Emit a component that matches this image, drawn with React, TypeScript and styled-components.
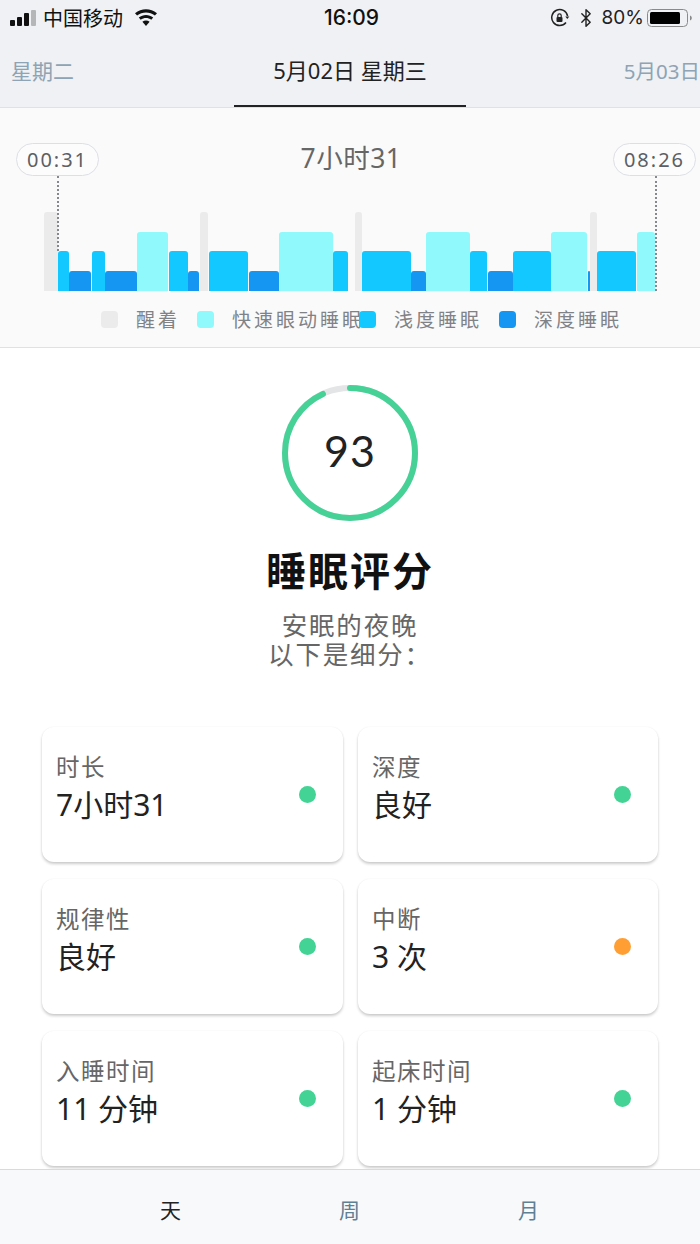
import React from 'react'
import styled, { createGlobalStyle } from 'styled-components'
import { Bluetooth } from 'lucide-react'

type Stage = 'awake' | 'rem' | 'light' | 'deep'

const stageColors: Record<Stage, string> = {
  awake: '#ebebec',
  rem: '#8ff9fb',
  light: '#12c8ff',
  deep: '#1496f2',
}

const stageHeights: Record<Stage, number> = {
  awake: 79,
  rem: 59,
  light: 40,
  deep: 20,
}

// start and end x of every block, in chart coordinates
const segments: [Stage, number, number][] = [
  ['awake', 0, 13.5],
  ['light', 13.5, 25],
  ['deep', 25, 47],
  ['light', 47.5, 61],
  ['deep', 61, 92.5],
  ['rem', 93, 124],
  ['light', 124.5, 144],
  ['deep', 144, 155],
  ['awake', 156, 164],
  ['light', 164.5, 204],
  ['deep', 204.5, 235],
  ['rem', 235, 289],
  ['light', 289, 304],
  ['awake', 310.5, 318],
  ['light', 318, 367],
  ['deep', 367, 382],
  ['rem', 382, 426],
  ['light', 426, 443],
  ['deep', 444, 469],
  ['light', 469, 507],
  ['rem', 507, 543],
  ['deep', 544, 545.5],
  ['awake', 546, 553],
  ['light', 553, 592],
  ['rem', 592.5, 611],
]

const legend: { stage: Stage; label: string; overlap?: boolean }[] = [
  { stage: 'awake', label: '醒着' },
  { stage: 'rem', label: '快速眼动睡眠' },
  { stage: 'light', label: '浅度睡眠', overlap: true },
  { stage: 'deep', label: '深度睡眠' },
]

const metrics = [
  { label: '时长', value: '7小时31', color: '#43d394' },
  { label: '深度', value: '良好', color: '#43d394' },
  { label: '规律性', value: '良好', color: '#43d394' },
  { label: '中断', value: '3 次', color: '#ff9f33' },
  { label: '入睡时间', value: '11 分钟', color: '#43d394' },
  { label: '起床时间', value: '1 分钟', color: '#43d394' },
]

const ringRadius = 65
const ringLength = 2 * Math.PI * ringRadius
const score = 93

const App = () => {
  let cursor = 0
  return (
    <>
      <GlobalStyle />
      <Page>
        <TopArea>
          <StatusBar>
            <StatusLeft>
              <SignalBars>
                <SignalBar $h={6} />
                <SignalBar $h={9} />
                <SignalBar $h={13} />
                <SignalBar $h={16} $off />
              </SignalBars>
              <Carrier>中国移动</Carrier>
              <svg width="24" height="18" viewBox="0 0 24 18">
                <path d="M12 17l-3.6-4.2c2.100-1.700 5.100-1.700 7.200 0L12 17z" fill="#111" />
                <path d="M6.700 10.800L4.800 8.600c4.200-3.500 10.200-3.500 14.400 0l-1.900 2.200c-3.100-2.500-7.500-2.500-10.600 0z" fill="#111" />
                <path d="M3.100 6.600L1 4.200c6.400-5.300 15.600-5.300 22 0l-2.100 2.400c-5.200-4.200-12.600-4.200-17.800 0z" fill="#111" />
              </svg>
            </StatusLeft>
            <StatusTime>16:09</StatusTime>
            <StatusRight>
              <svg width="20" height="20" viewBox="0 0 20 20" fill="none">
                <path d="M16 14.500A8 8 0 1 1 17.600 8" stroke="#222" strokeWidth="1.500" />
                <path d="M15.300 8.500h4l-2 2.500z" fill="#222" />
                <rect x="6.500" y="9" width="6" height="5" rx="1" fill="#222" />
                <path d="M7.800 9V7.500a1.700 1.700 0 0 1 3.400 0V9" stroke="#222" strokeWidth="1.200" />
              </svg>
              <Bluetooth size={20} color="#222" strokeWidth={1.700} />
              <BatteryText>80%</BatteryText>
              <svg width="46" height="20" viewBox="0 0 46 20" fill="none">
                <rect x="0.500" y="1.500" width="40" height="17" rx="4" stroke="#8a8a8c" />
                <rect x="3" y="4" width="30" height="12" rx="1.500" fill="#000" />
                <path d="M43 7.500c1.300.4 1.800 1.300 1.800 2.500s-.5 2.100-1.800 2.500z" fill="#8a8a8c" />
              </svg>
            </StatusRight>
          </StatusBar>
          <DayTabs>
            <SideDay>星期二</SideDay>
            <CurrentDay>5月02日 星期三</CurrentDay>
            <NextDay>5月03日</NextDay>
          </DayTabs>
        </TopArea>

        <ChartPanel>
          <ChartHeader>
            <TimePill>00:31</TimePill>
            <Duration>7小时31</Duration>
            <TimePill>08:26</TimePill>
          </ChartHeader>
          <Chart>
            <Marker $left={13} $height={75} />
            <Marker $left={611} $height={115} />
            {segments.map(([stage, from, to], i) => {
              const gap = from - cursor
              cursor = to
              return (
                <Block
                  key={i}
                  $stage={stage}
                  style={{ width: to - from, marginLeft: gap }}
                />
              )
            })}
          </Chart>
          <Legend>
            {legend.map((item) => (
              <LegendItem key={item.label} $overlap={item.overlap}>
                <Swatch $stage={item.stage} />
                <LegendLabel>{item.label}</LegendLabel>
              </LegendItem>
            ))}
          </Legend>
        </ChartPanel>

        <Content>
          <ScoreRing>
            <svg width="140" height="140" viewBox="0 0 140 140" fill="none">
              <circle cx="70" cy="70" r={ringRadius} stroke="#e4e5e6" strokeWidth="6" />
              <circle
                cx="70"
                cy="70"
                r={ringRadius}
                stroke="#46d196"
                strokeWidth="6"
                strokeLinecap="round"
                strokeDasharray={`${(ringLength * score) / 100} ${ringLength}`}
                transform="rotate(-90 70 70)"
              />
            </svg>
            <ScoreValue>{score}</ScoreValue>
          </ScoreRing>
          <ScoreTitle>睡眠评分</ScoreTitle>
          <ScoreNote>
            安眠的夜晚
            <br />
            以下是细分：
          </ScoreNote>
          <MetricGrid>
            {metrics.map((metric) => (
              <MetricCard key={metric.label}>
                <MetricText>
                  <MetricLabel>{metric.label}</MetricLabel>
                  <MetricValue>{metric.value}</MetricValue>
                </MetricText>
                <MetricDot $color={metric.color} />
              </MetricCard>
            ))}
          </MetricGrid>
        </Content>

        <BottomTabs>
          <BottomTab $active>天</BottomTab>
          <BottomTab>周</BottomTab>
          <BottomTab>月</BottomTab>
        </BottomTabs>
      </Page>
    </>
  )
}

const GlobalStyle = createGlobalStyle`
  html, body {
    margin: 0;
    padding: 0;
    background: #ffffff;
  }
  * {
    box-sizing: border-box;
  }
`

const Page = styled.div`
  width: 700px;
  height: 1244px;
  display: flex;
  flex-direction: column;
  overflow: hidden;
  background: #ffffff;
  font-family: "Noto Sans", "Noto Sans CJK SC", sans-serif;
`

const TopArea = styled.header`
  height: 108px;
  flex-shrink: 0;
  background: #eff1f4;
  border-bottom: 1px solid #dfe1e5;
`

const StatusBar = styled.div`
  height: 35px;
  display: grid;
  grid-template-columns: 1fr auto 1fr;
  align-items: center;
  padding: 0 7px 0 10px;
  color: #111111;
`

const StatusLeft = styled.div`
  display: flex;
  align-items: center;
  gap: 10px;
`

const SignalBars = styled.div`
  display: flex;
  align-items: flex-end;
  gap: 2px;
  height: 16px;
  margin-right: -5px;
`

const SignalBar = styled.div<{ $h: number; $off?: boolean }>`
  width: 5px;
  height: ${(p) => p.$h}px;
  border-radius: 1px;
  background: ${(p) => (p.$off ? '#b5b6b8' : '#111111')};
`

const Carrier = styled.span`
  font-size: 20px;
  margin-left: 2px;
  margin-right: 1px;
`

const StatusTime = styled.span`
  font-family: Inter, "Liberation Sans", sans-serif;
  font-size: 21px;
  font-weight: 500;
`

const StatusRight = styled.div`
  display: flex;
  align-items: center;
  justify-content: flex-end;
  gap: 6px;
`

const BatteryText = styled.span`
  font-family: Inter, "Liberation Sans", sans-serif;
  font-size: 19px;
  margin-right: -3px;
  color: #222222;
`

const DayTabs = styled.nav`
  height: 72px;
  display: grid;
  grid-template-columns: 234px 232px 234px;
`

const SideDay = styled.div`
  display: flex;
  align-items: center;
  padding: 0 0 2px 11px;
  font-size: 21px;
  color: #8ea3b3;
`

const NextDay = styled(SideDay)`
  justify-content: flex-end;
  padding: 0 0 2px 0;
  font-size: 20.5px;
`

const CurrentDay = styled.div`
  display: flex;
  align-items: center;
  justify-content: center;
  padding-bottom: 2px;
  font-size: 22px;
  white-space: nowrap;
  color: #222222;
  border-bottom: 2px solid #222222;
  height: 72px;
`

const ChartPanel = styled.section`
  height: 240px;
  flex-shrink: 0;
  padding-top: 35px;
  background: #fafafb;
  border-bottom: 1px solid #dfe1e8;
`

const ChartHeader = styled.div`
  height: 33px;
  display: flex;
  align-items: center;
  justify-content: space-between;
  padding: 0 4px 0 16px;
`

const TimePill = styled.div`
  width: 83px;
  height: 33px;
  display: flex;
  align-items: center;
  justify-content: center;
  border: 1.5px solid #dedfe4;
  border-radius: 17px;
  background: #fcfcfd;
  font-size: 20px;
  letter-spacing: 2px;
  color: #5c5f63;
`

const Duration = styled.div`
  margin: -6px 0 0 -10px;
  font-size: 26.5px;
  letter-spacing: 0.5px;
  color: #666666;
`

const Chart = styled.div`
  position: relative;
  height: 79px;
  margin: 36px 0 0 44px;
  display: flex;
  align-items: flex-end;
`

const Marker = styled.div<{ $left: number; $height: number }>`
  position: absolute;
  z-index: 1;
  left: ${(p) => p.$left}px;
  top: -36px;
  height: ${(p) => p.$height}px;
  border-left: 2px dotted #85888e;
`

const Block = styled.div<{ $stage: Stage }>`
  flex-shrink: 0;
  height: ${(p) => stageHeights[p.$stage]}px;
  background: ${(p) => stageColors[p.$stage]};
  border-radius: 3px 3px 0 0;
`

const Legend = styled.div`
  display: flex;
  align-items: center;
  gap: 20px;
  margin: 14px 0 0 101px;
`

const LegendItem = styled.div<{ $overlap?: boolean }>`
  display: flex;
  align-items: center;
  gap: 18px;
  margin-left: ${(p) => (p.$overlap ? '-22px' : '0')};
`

const Swatch = styled.div<{ $stage: Stage }>`
  width: 17px;
  height: 17px;
  border-radius: 4px;
  background: ${(p) => stageColors[p.$stage]};
`

const LegendLabel = styled.span`
  font-size: 19px;
  letter-spacing: 3px;
  margin-right: -3px;
  color: #808286;
`

const Content = styled.main`
  flex: 1;
  min-height: 0;
  overflow: hidden;
  display: flex;
  flex-direction: column;
  align-items: center;
  padding-top: 35px;
`

const ScoreRing = styled.div`
  position: relative;
  width: 140px;
  height: 140px;
  flex-shrink: 0;
`

const ScoreValue = styled.div`
  position: absolute;
  inset: 0;
  padding-bottom: 5px;
  display: flex;
  align-items: center;
  justify-content: center;
  font-family: Lato, sans-serif;
  font-weight: 400;
  font-size: 43px;
  letter-spacing: 1px;
  color: #222222;
`

const ScoreTitle = styled.h1`
  margin: 20px 0 0;
  font-size: 40px;
  line-height: 56px;
  font-weight: 700;
  letter-spacing: 2px;
  color: #111111;
`

const ScoreNote = styled.p`
  margin: 12px 0 0;
  font-size: 25.5px;
  line-height: 29px;
  letter-spacing: 1.8px;
  text-align: center;
  color: #666666;
`

const MetricGrid = styled.div`
  width: 616px;
  margin-top: 58px;
  display: grid;
  grid-template-columns: 301px 300px;
  grid-auto-rows: 135px;
  gap: 17px 15px;
  flex-shrink: 0;
`

const MetricCard = styled.div`
  display: flex;
  justify-content: space-between;
  padding: 25px 27px 0 14px;
  background: #ffffff;
  border-radius: 12px;
  box-shadow: 0 2px 3px rgba(0, 0, 0, 0.2), 0 0 2px rgba(0, 0, 0, 0.05);
`

const MetricText = styled.div`
  display: flex;
  flex-direction: column;
`

const MetricLabel = styled.div`
  font-size: 23.5px;
  line-height: 30px;
  letter-spacing: 1.5px;
  color: #666666;
`

const MetricValue = styled.div`
  margin-top: 3px;
  font-size: 30px;
  line-height: 40px;
  color: #222222;
`

const MetricDot = styled.div<{ $color: string }>`
  width: 17px;
  height: 17px;
  margin-top: 34px;
  border-radius: 50%;
  background: ${(p) => p.$color};
`

const BottomTabs = styled.nav`
  height: 75px;
  flex-shrink: 0;
  display: flex;
  align-items: center;
  padding: 4px 0 0 81px;
  background: #f8f9fa;
  border-top: 1px solid #d9dadc;
`

const BottomTab = styled.div<{ $active?: boolean }>`
  width: 179px;
  text-align: center;
  font-size: 21px;
  color: ${(p) => (p.$active ? '#222222' : '#5f7f95')};
`

export default App
